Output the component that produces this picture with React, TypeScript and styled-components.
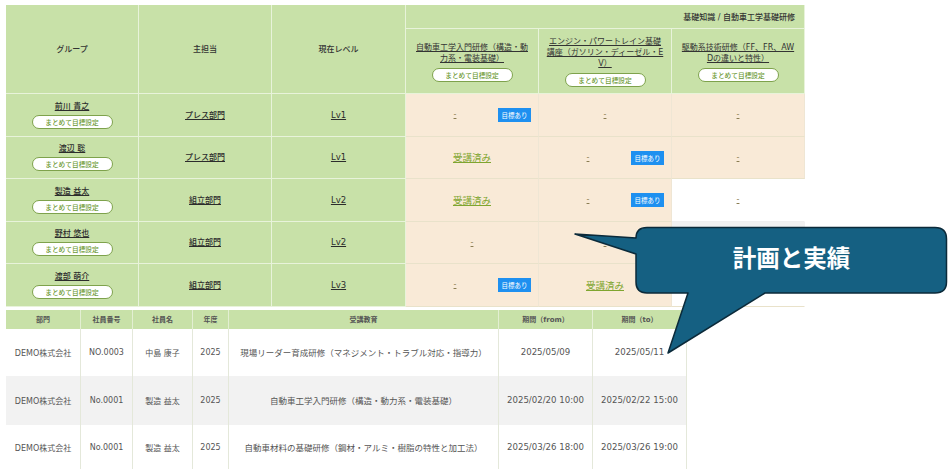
import React from 'react';
import styled, { createGlobalStyle } from 'styled-components';

const Global = createGlobalStyle`
  html, body { margin: 0; padding: 0; background: #fff; }
  body { width: 952px; height: 469px; overflow: hidden; font-family: "DejaVu Sans", "Noto Sans CJK JP", sans-serif; }
`;

const Page = styled.div`
  position: relative;
  width: 952px;
  height: 469px;
  overflow: hidden;
  padding: 5px 0 0 6px;
  box-sizing: border-box;
`;

const MatrixGrid = styled.div`
  display: grid;
  width: 799px;
  grid-template-columns: 133px 133px 134px 133px 133px 133px;
  grid-template-rows: 24px 65px repeat(5, 42.5px);
`;

const GreenHead = styled.div`
  background: #c8e1a8;
  border-right: 1px solid #e8f3da;
  border-bottom: 1px solid #e8f3da;
  box-sizing: border-box;
  display: flex;
  align-items: center;
  justify-content: center;
  font-size: 8px;
  font-weight: 500;
  color: #333;
`;

const TallHead = styled(GreenHead)`
  grid-row: span 2;
  padding-bottom: 2px;
`;

const CategoryHead = styled(GreenHead)`
  grid-column: span 3;
  justify-content: flex-end;
  padding-right: 9px;
  font-size: 8px;
`;

const CourseHead = styled(GreenHead)`
  flex-direction: column;
  gap: 4px;
  padding: 1px 7px 0;
  font-weight: 400;
`;

const CourseLink = styled.a`
  font-size: 8px;
  line-height: 11px;
  text-align: center;
  text-decoration: underline;
  word-break: break-all;
  color: #333;
`;

const PillButton = styled.span`
  flex: none;
  width: 81px;
  height: 14px;
  border: 1px solid #7ea24c;
  border-radius: 8px;
  background: #fff;
  box-sizing: border-box;
  display: flex;
  align-items: center;
  justify-content: center;
  font-size: 6.7px;
  color: #6d9a35;
  font-weight: 500;
`;

const GroupCell = styled(GreenHead)`
  flex-direction: column;
  gap: 3px;
`;

const ValueCell = styled(GreenHead)`
  padding-top: 1px;
`;

const StrongLink = styled.a`
  font-size: 8px;
  line-height: 11px;
  text-decoration: underline;
  color: #2c2c2c;
`;

const LevelLink = styled(StrongLink)`
  font-size: 8.5px;
`;

const toneColor = { cream: '#f9ead7', white: '#fff', gray: '#f1f1f1' };
const toneLine = { cream: '#e9e2ca', white: '#efefef', gray: '#efefef' };

const MarkCell = styled.div<{ $tone: keyof typeof toneColor; $last?: boolean }>`
  position: relative;
  background: ${p => toneColor[p.$tone]};
  border-right: 1px solid ${p => (p.$tone === 'cream' ? '#efe6d4' : 'transparent')};
  border-bottom: 1px solid ${p => (p.$last ? '#e9e2ca' : toneLine[p.$tone])};
  box-sizing: border-box;
  display: flex;
  align-items: center;
  justify-content: center;
`;

const Dash = styled.a<{ $shift?: boolean }>`
  font-size: 8px;
  color: #8a7d52;
  text-decoration: underline;
  transform: translateX(${p => (p.$shift ? '-17px' : '0')});
`;

const DoneLink = styled.a`
  font-size: 9.5px;
  color: #7fa52f;
  text-decoration: underline;
`;

const Badge = styled.span`
  position: absolute;
  right: 7px;
  top: 14px;
  width: 33px;
  height: 14px;
  background: #1e90f0;
  color: #fff;
  font-size: 6.5px;
  display: flex;
  align-items: center;
  justify-content: center;
`;

const RecordGrid = styled.div`
  display: grid;
  width: 681px;
  margin-top: 3px;
  grid-template-columns: 75px 52px 60px 36px 270px 94px 94px;
  grid-template-rows: 19px 47px 49px 45px;
`;

const RecordHead = styled.div`
  background: #c8e1a8;
  border-right: 1px solid #e3efd2;
  box-sizing: border-box;
  display: flex;
  align-items: center;
  justify-content: center;
  font-size: 7px;
  font-weight: 700;
  color: #555;
`;

const RecordCell = styled.div<{ $gray?: boolean; $size: number }>`
  background: ${p => (p.$gray ? '#f2f2f2' : '#fff')};
  border-right: 1px solid #e4e8da;
  box-sizing: border-box;
  display: flex;
  align-items: center;
  justify-content: center;
  font-size: ${p => p.$size}px;
  color: #555;
  white-space: nowrap;
`;

const CalloutShape = styled.svg`
  position: absolute;
  left: 0;
  top: 0;
  pointer-events: none;
`;

const CalloutText = styled.div`
  position: absolute;
  left: 636px;
  top: 228px;
  width: 311px;
  height: 66px;
  padding-bottom: 8px;
  box-sizing: border-box;
  display: flex;
  align-items: center;
  justify-content: center;
  font-family: "Noto Sans CJK JP", sans-serif;
  font-size: 23.5px;
  font-weight: 700;
  color: #fff;
`;

type Mark = { k: 'dash' | 'done'; badge?: boolean; tone?: keyof typeof toneColor };
const rows: { name: string; dept: string; lv: string; marks: Mark[] }[] = [
  { name: '前川 貴之', dept: 'プレス部門', lv: 'Lv1', marks: [{ k: 'dash', badge: true }, { k: 'dash' }, { k: 'dash' }] },
  { name: '渡辺 聡', dept: 'プレス部門', lv: 'Lv1', marks: [{ k: 'done' }, { k: 'dash', badge: true }, { k: 'dash' }] },
  { name: '製造 益太', dept: '組立部門', lv: 'Lv2', marks: [{ k: 'done' }, { k: 'dash', badge: true }, { k: 'dash', tone: 'white' }] },
  { name: '野村 悠也', dept: '組立部門', lv: 'Lv2', marks: [{ k: 'dash' }, { k: 'dash' }, { k: 'dash', tone: 'gray' }] },
  { name: '渡部 萌介', dept: '組立部門', lv: 'Lv3', marks: [{ k: 'dash', badge: true }, { k: 'done' }, { k: 'dash', tone: 'white' }] },
];

const records = [
  ['DEMO株式会社', 'NO.0003', '中島 康子', '2025', '現場リーダー育成研修（マネジメント・トラブル対応・指導力）', '2025/05/09', '2025/05/11'],
  ['DEMO株式会社', 'No.0001', '製造 益太', '2025', '自動車工学入門研修（構造・動力系・電装基礎）', '2025/02/20 10:00', '2025/02/22 15:00'],
  ['DEMO株式会社', 'No.0001', '製造 益太', '2025', '自動車材料の基礎研修（鋼材・アルミ・樹脂の特性と加工法）', '2025/03/26 18:00', '2025/03/26 19:00'],
];

const recordSizes = [8, 8, 8, 8, 8.5, 8.6, 8.6];
const BULK = 'まとめて目標設定';

export default function App() {
  return (
    <Page>
      <Global />
      <MatrixGrid>
        <TallHead>グループ</TallHead>
        <TallHead>主担当</TallHead>
        <TallHead>現在レベル</TallHead>
        <CategoryHead>基礎知識 / 自動車工学基礎研修</CategoryHead>
        <CourseHead>
          <CourseLink>自動車工学入門研修（構造・動力系・電装基礎）</CourseLink>
          <PillButton>{BULK}</PillButton>
        </CourseHead>
        <CourseHead>
          <CourseLink>エンジン・パワートレイン基礎講座（ガソリン・ディーゼル・EV）</CourseLink>
          <PillButton>{BULK}</PillButton>
        </CourseHead>
        <CourseHead>
          <CourseLink>駆動系技術研修（FF、FR、AWDの違いと特性）</CourseLink>
          <PillButton>{BULK}</PillButton>
        </CourseHead>
        {rows.map((r, ri) => (
          <React.Fragment key={r.name}>
            <GroupCell>
              <StrongLink>{r.name}</StrongLink>
              <PillButton>{BULK}</PillButton>
            </GroupCell>
            <ValueCell><StrongLink>{r.dept}</StrongLink></ValueCell>
            <ValueCell><LevelLink>{r.lv}</LevelLink></ValueCell>
            {r.marks.map((m, i) => (
              <MarkCell key={i} $tone={m.tone ?? 'cream'} $last={ri === rows.length - 1}>
                {m.k === 'done' ? <DoneLink>受講済み</DoneLink> : <Dash $shift={m.badge}>-</Dash>}
                {m.badge && <Badge>目標あり</Badge>}
              </MarkCell>
            ))}
          </React.Fragment>
        ))}
      </MatrixGrid>
      <RecordGrid>
        {['部門', '社員番号', '社員名', '年度', '受講教育', '期間（from）', '期間（to）'].map(h => (
          <RecordHead key={h}>{h}</RecordHead>
        ))}
        {records.map((rec, i) =>
          rec.map((c, j) => (
            <RecordCell key={`${i}-${j}`} $gray={i === 1} $size={recordSizes[j]}>{c}</RecordCell>
          ))
        )}
      </RecordGrid>
      <CalloutShape width="952" height="469" viewBox="0 0 952 469">
        <path
          d="M647 227.5 H935 Q946.5 227.5 946.5 239 V282 Q946.5 293 935 293 H765 L668 353 L688 293 H647 Q636 293 636 282 V254 L575 234 L636 238 Q636 227.5 647 227.5 Z"
          fill="#156082"
          stroke="#0b2a3a"
          strokeWidth="1.5"
          strokeLinejoin="round"
        />
      </CalloutShape>
      <CalloutText>計画と実績</CalloutText>
    </Page>
  );
}
